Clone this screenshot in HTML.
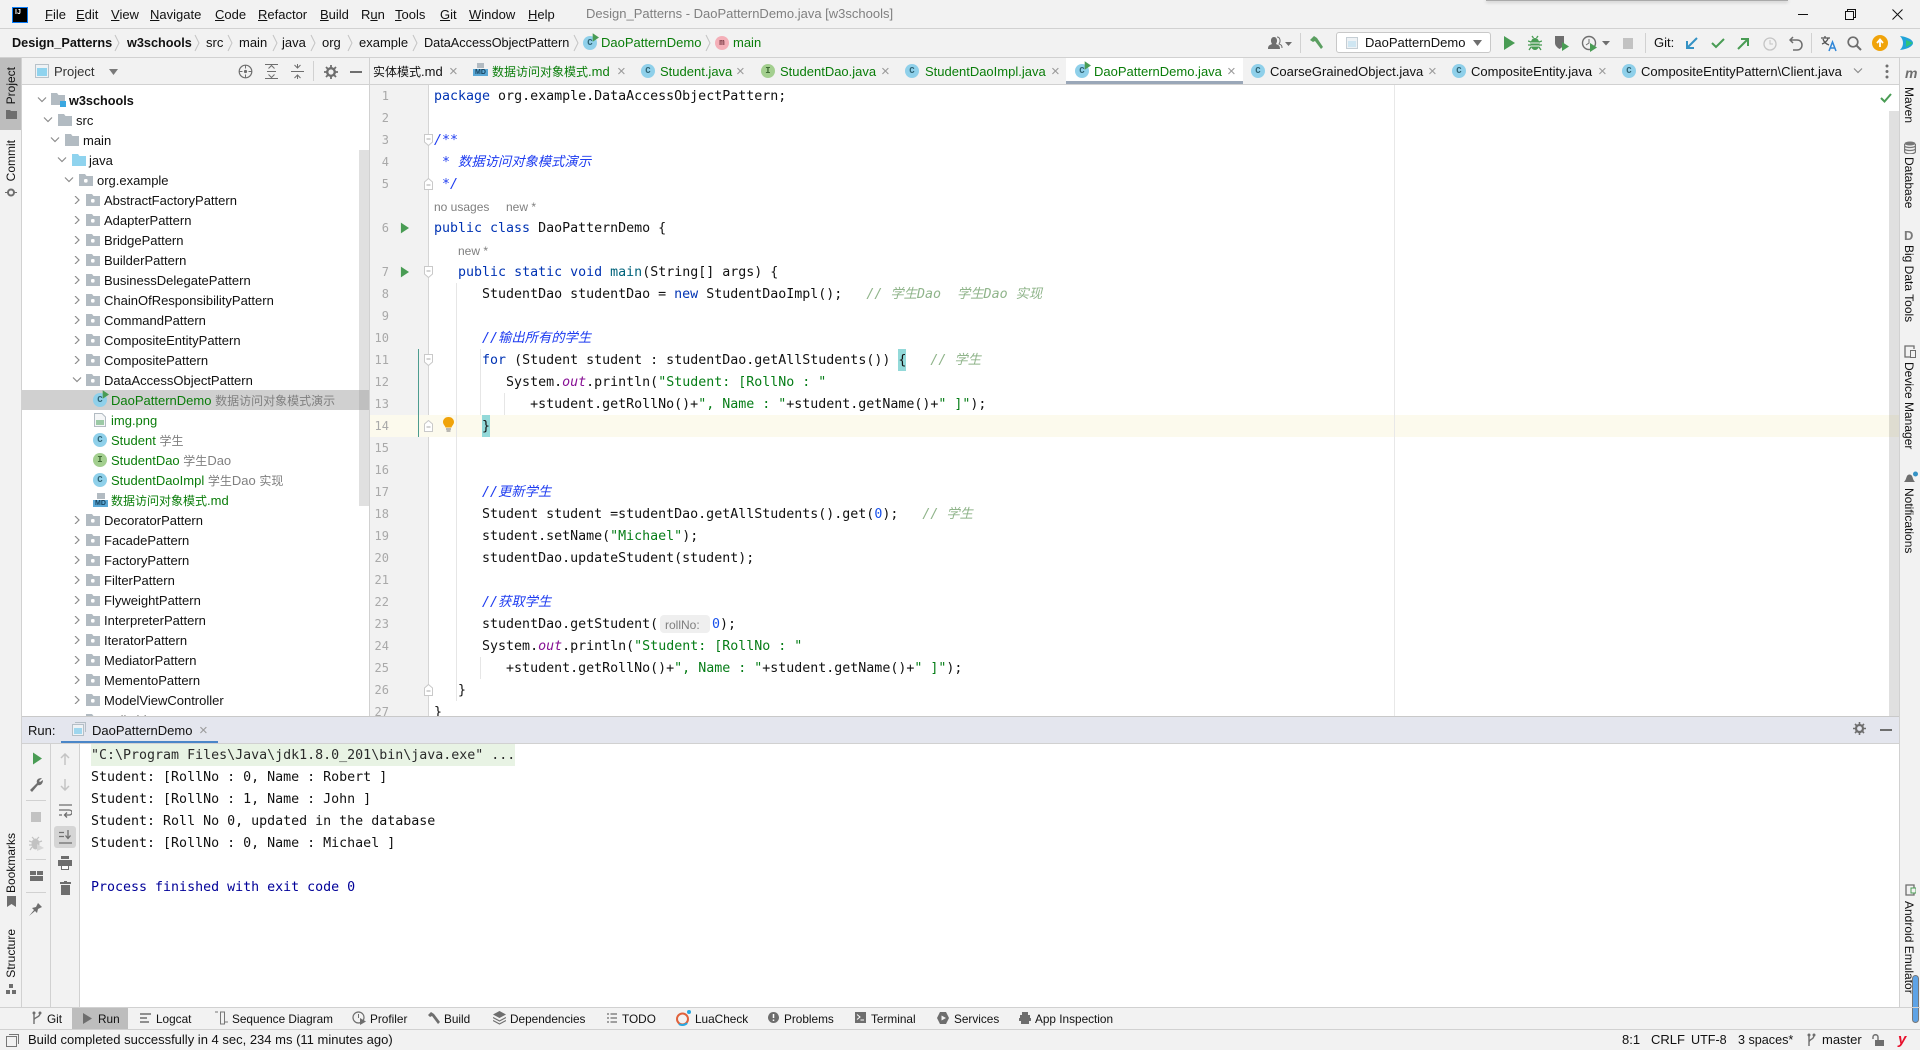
<!DOCTYPE html>
<html lang="zh"><head><meta charset="utf-8"><title>Design_Patterns - DaoPatternDemo.java [w3schools]</title>
<style>
html,body{margin:0;padding:0;background:#fff}
#w{position:relative;width:1920px;height:1050px;overflow:hidden;background:#f2f2f2;font:13px "Liberation Sans","Noto Sans CJK SC",sans-serif;color:#111}
#w div,#w svg,#w span.a{position:absolute}
.t{white-space:nowrap;line-height:16px}
.h{background:#d1d1d1}
.g{color:#0a7d0a}
.x{color:#9a9a9a;font-size:15px;line-height:16px;white-space:nowrap}
.ic{width:14px;height:14px;border-radius:50%;background:#8fd0ea;color:#2f6475;font:bold 9px/14px "Liberation Mono",monospace;text-align:center}
.ii{background:#a3cf8f;color:#3d6a33}
.r{left:0;width:347px;height:20px;line-height:20px;white-space:nowrap}
.r b{font-weight:normal;position:absolute;left:82px;top:1px}
.r.pk .c1{left:51px;top:6px;width:8px;height:8px}
.r.pk .f1{left:64px;top:4px;width:14px;height:12px}
.r em{font-style:normal;color:#808080}
i{font-style:normal;font-size:12px}
.l{left:0;height:22px;margin-top:1px;white-space:pre;font:13.3px/22px "DejaVu Sans Mono","Noto Sans CJK SC",monospace;color:#111}
.n{left:370px;width:19px;text-align:right;height:22px;font:12px/22px "DejaVu Sans Mono",monospace;color:#a9a9a9}
.k{color:#0033b3}.d{color:#1d3bf0;font-style:italic}.c{color:#8fb48a;font-style:italic}.s{color:#067d17}.nu{color:#1750eb}.m{color:#00627a}.f{color:#871094;font-style:italic}
.u{font:12px/22px "Liberation Sans",sans-serif;color:#7f7f7f;white-space:nowrap;height:22px;margin-top:1px}
.v{writing-mode:vertical-rl;font-size:12px;line-height:14px;white-space:nowrap;color:#111}
.vl{transform:rotate(180deg)}
.co{left:91px;height:22px;margin-top:1px;font:13.3px/22px "DejaVu Sans Mono",monospace;white-space:pre;color:#111}
.bb{top:1012px;font-size:11.8px;line-height:15px;white-space:nowrap;color:#111}
.sb{top:1032px;font-size:13px;line-height:16px;white-space:nowrap;color:#111}
.sep{width:1px;background:#d1d1d1}
</style></head><body><div id="w">
<svg width="0" height="0" style="left:0;top:0"><defs>
<symbol id="cr" viewBox="0 0 8 8"><path d="M2 0L6 4L2 8" fill="none" stroke="#8c8c8c" stroke-width="1.2"/></symbol>
<symbol id="cd" viewBox="0 0 10 8"><path d="M1 1.5L5 5.5L9 1.5" fill="none" stroke="#8c8c8c" stroke-width="1.2"/></symbol>
<symbol id="fo" viewBox="0 0 14 12"><path d="M0 0H6L7.5 2H14V12H0Z" fill="#b2bbc2"/></symbol>
<symbol id="pk" viewBox="0 0 14 12"><path d="M0 0H6L7.5 2H14V12H0Z" fill="#b2bbc2"/><rect x="5" y="5" width="3.6" height="3.6" rx="1.2" fill="#fff"/></symbol>
<symbol id="ps" viewBox="0 0 10 12"><path d="M1 0L10 6L1 12Z" fill="#499c54"/></symbol>
<symbol id="fd" viewBox="0 0 9 12"><path d="M.5 .5H8.5V8L4.5 11.5L.5 8Z" fill="#fff" stroke="#c9c9c9"/><path d="M2.5 5H6.5" stroke="#aaa"/></symbol>
<symbol id="fu" viewBox="0 0 9 12"><path d="M.5 11.5H8.5V4L4.5 .5L.5 4Z" fill="#fff" stroke="#c9c9c9"/><path d="M2.5 7H6.5" stroke="#aaa"/></symbol>
</defs></svg>

<!-- title bar -->
<div style="left:1486px;top:0;width:302px;height:1px;background:#aaa;box-shadow:0 1px 3px #999"></div>
<div style="left:12px;top:7px;width:16px;height:16px;background:#000;border:1px solid #087cfa;box-sizing:border-box;color:#fff;font:bold 7px/9px 'Liberation Sans',sans-serif;padding-left:2px">IJ</div>
<div class="t" style="left:45px;top:7px"><u>F</u>ile</div>
<div class="t" style="left:76px;top:7px"><u>E</u>dit</div>
<div class="t" style="left:111px;top:7px"><u>V</u>iew</div>
<div class="t" style="left:150px;top:7px"><u>N</u>avigate</div>
<div class="t" style="left:215px;top:7px"><u>C</u>ode</div>
<div class="t" style="left:258px;top:7px"><u>R</u>efactor</div>
<div class="t" style="left:320px;top:7px"><u>B</u>uild</div>
<div class="t" style="left:361px;top:7px">R<u>u</u>n</div>
<div class="t" style="left:395px;top:7px"><u>T</u>ools</div>
<div class="t" style="left:440px;top:7px"><u>G</u>it</div>
<div class="t" style="left:469px;top:7px"><u>W</u>indow</div>
<div class="t" style="left:528px;top:7px"><u>H</u>elp</div>
<div class="t" style="left:586px;top:6px;color:#808080">Design_Patterns - DaoPatternDemo.java [w3schools]</div>
<div style="left:1798px;top:14px;width:10px;height:1px;background:#111"></div>
<svg style="left:1845px;top:9px" width="11" height="11"><path d="M.5 2.5H8.5V10.5H.5ZM2.5 2.5V.5H10.5V8.5H8.5" fill="none" stroke="#111"/></svg>
<svg style="left:1892px;top:9px" width="11" height="11"><path d="M.5 .5L10.5 10.5M10.5 .5L.5 10.5" stroke="#111"/></svg>
<div class="h" style="left:0;top:28px;width:1920px;height:1px"></div>

<!-- breadcrumb -->
<div class="t" style="left:12px;top:35px;font-weight:bold;font-size:12.7px">Design_Patterns</div>
<div class="t" style="left:127px;top:35px;font-weight:bold;font-size:12.7px">w3schools</div>
<div class="t" style="left:206px;top:35px">src</div>
<div class="t" style="left:239px;top:35px">main</div>
<div class="t" style="left:282px;top:35px">java</div>
<div class="t" style="left:322px;top:35px">org</div>
<div class="t" style="left:359px;top:35px">example</div>
<div class="t" style="left:424px;top:35px;font-size:12.7px">DataAccessObjectPattern</div>
<div class="ic" style="left:583px;top:36px">C</div>
<svg style="left:592px;top:33px" width="7" height="9"><use href="#ps"/></svg>
<div class="t g" style="left:601px;top:35px">DaoPatternDemo</div>
<div class="ic" style="left:715px;top:36px;background:#f4afb8;color:#7a3a44">m</div>
<div class="t g" style="left:733px;top:35px">main</div>
<svg style="left:0;top:34px" width="720" height="18"><path d="M115 1L119 9L115 17M195 1L199 9L195 17M228 1L232 9L228 17M273 1L277 9L273 17M311 1L315 9L311 17M348 1L352 9L348 17M413 1L417 9L413 17M574 1L578 9L574 17M706 1L710 9L706 17" fill="none" stroke="#c4c4c4"/></svg>

<!-- toolbar -->
<svg style="left:1267px;top:36px" width="26" height="14"><path d="M1 13C1 9 3 9 5 8C3 5 4 1 7 1C10 1 11 5 9 8C11 9 13 9 13 13Z" fill="#6e6e6e"/><path d="M10 1C13 1 14 5 12 8C14 9 15 9 15 12" fill="none" stroke="#6e6e6e"/><path d="M18 6H25L21.500 10Z" fill="#6e6e6e"/></svg>
<div class="sep" style="left:1300px;top:33px;height:20px"></div>
<svg style="left:1309px;top:35px" width="15" height="15"><path d="M1 5L5 1L8 3L14 12L12 14L6 6L4 7Z" fill="#5a9e60"/></svg>
<div style="left:1336px;top:32px;width:155px;height:21px;background:#fff;border:1px solid #c8c8c8;border-radius:3px;box-sizing:border-box"></div>
<svg style="left:1346px;top:37px" width="12" height="12"><rect x=".5" y=".5" width="11" height="11" fill="#eef2f5" stroke="#c5ced4"/><rect x="2" y="4" width="8" height="6" fill="#cfe6f2"/></svg>
<div class="t" style="left:1365px;top:35px">DaoPatternDemo</div>
<svg style="left:1473px;top:40px" width="9" height="6"><path d="M0 0H9L4.500 6Z" fill="#6e6e6e"/></svg>
<svg style="left:1504px;top:36px" width="11" height="14"><path d="M0 0L11 7L0 14Z" fill="#499c54"/></svg>
<svg style="left:1528px;top:35px" width="14" height="16"><ellipse cx="7" cy="9" rx="4.500" ry="6" fill="#499c54"/><path d="M0 6L3 7M14 6L11 7M0 10H3M14 10H11M1 15L3 12M13 15L11 12M4 1L5.500 3M10 1L8.500 3" stroke="#499c54" stroke-width="1.300"/><path d="M3 8H11M3 11H11" stroke="#f2f2f2"/></svg>
<svg style="left:1554px;top:35px" width="16" height="16"><path d="M1 1H10V8C10 11 7 13 5.500 14C4 13 1 11 1 8Z" fill="#6e6e6e"/><path d="M8 7L15 11.500L8 16Z" fill="#499c54"/></svg>
<svg style="left:1581px;top:35px" width="30" height="17"><circle cx="8" cy="8" r="6.500" fill="none" stroke="#6e6e6e" stroke-width="1.400"/><path d="M8 4V8L5 10" fill="none" stroke="#6e6e6e"/><path d="M9 8L16 12.500L9 17Z" fill="#499c54"/><path d="M21 6H29L25 10.500Z" fill="#6e6e6e"/></svg>
<div style="left:1623px;top:38px;width:10px;height:11px;background:#c2c2c2"></div>
<div class="sep" style="left:1645px;top:33px;height:20px"></div>
<div class="t" style="left:1654px;top:35px">Git:</div>
<svg style="left:1685px;top:37px" width="13" height="13"><path d="M12 1L2 11M2 4V11H9" fill="none" stroke="#3592c4" stroke-width="2"/></svg>
<svg style="left:1711px;top:38px" width="14" height="11"><path d="M1 5L5 9L13 1" fill="none" stroke="#499c54" stroke-width="2"/></svg>
<svg style="left:1737px;top:37px" width="13" height="13"><path d="M1 12L11 2M4 2H11V9" fill="none" stroke="#499c54" stroke-width="2"/></svg>
<svg style="left:1763px;top:37px" width="14" height="14"><circle cx="7" cy="7" r="6" fill="none" stroke="#c4c4c4" stroke-width="1.300"/><path d="M7 3V7H10" fill="none" stroke="#c4c4c4"/></svg>
<svg style="left:1789px;top:36px" width="14" height="15"><path d="M4 1L1 4L4 7M1 4H8C11 4 13 6 13 9S11 14 8 14H4" fill="none" stroke="#6e6e6e" stroke-width="1.500"/></svg>
<div class="sep" style="left:1811px;top:33px;height:20px"></div>
<svg style="left:1820px;top:34px" width="17" height="18"><path d="M1 4H10M5 2V4M2 10C5 9 8 6 8 4M3 5C4 8 6 10 9 11" fill="none" stroke="#555" stroke-width="1.300"/><path d="M9 17L12.500 8L16 17M10.500 14H14.500" fill="none" stroke="#2f86d8" stroke-width="1.500"/></svg>
<svg style="left:1847px;top:36px" width="15" height="15"><circle cx="6" cy="6" r="4.800" fill="none" stroke="#6e6e6e" stroke-width="1.700"/><path d="M9.500 9.500L14 14" stroke="#6e6e6e" stroke-width="2"/></svg>
<svg style="left:1872px;top:35px" width="16" height="16"><circle cx="8" cy="8" r="8" fill="#f0a30a"/><path d="M8 12V5M5 8L8 4.500L11 8" fill="none" stroke="#fff" stroke-width="1.800"/></svg>
<svg style="left:1899px;top:35px" width="15" height="16"><path d="M1 1C9 2 14 5 14 8C14 11 9 14 1 15C5 11 5 5 1 1Z" fill="#21a4d8"/><path d="M7 5L14 8L7 12Z" fill="#2fc37a"/></svg>
<div class="h" style="left:0;top:57px;width:1920px;height:1px"></div>

<!-- left strip -->
<div style="left:0;top:58px;width:21px;height:72px;background:#bdbdbd"></div>
<div class="h" style="left:21px;top:58px;width:1px;height:949px"></div>
<div class="v vl" style="left:4px;top:67px">Project</div>
<svg style="left:6px;top:110px" width="11" height="9"><path d="M0 0H4L5 1H11V9H0Z" fill="#6e6e6e"/></svg>
<div class="v vl" style="left:4px;top:140px">Commit</div>
<svg style="left:5px;top:187px" width="12" height="11"><circle cx="6" cy="5.500" r="3" fill="none" stroke="#6e6e6e" stroke-width="2"/><path d="M0 5.500H3M9 5.500H12" stroke="#6e6e6e"/></svg>
<div class="v vl" style="left:4px;top:833px">Bookmarks</div>
<svg style="left:7px;top:896px" width="9" height="11"><path d="M0 0H9V11L4.500 8L0 11Z" fill="#6e6e6e"/></svg>
<div class="v vl" style="left:4px;top:929px">Structure</div>
<svg style="left:6px;top:984px" width="10" height="10"><rect x="3" y="0" width="4" height="4" fill="#6e6e6e"/><rect x="0" y="6" width="4" height="4" fill="#6e6e6e"/><rect x="6" y="6" width="4" height="4" fill="#6e6e6e"/></svg>

<!-- project header -->
<svg style="left:35px;top:64px" width="14" height="14"><rect x=".5" y=".5" width="13" height="13" fill="#eef2f5" stroke="#b8c2c9"/><rect x="2" y="4" width="10" height="8" fill="#8fd3ee"/></svg>
<div class="t" style="left:54px;top:64px;color:#333">Project</div>
<svg style="left:109px;top:69px" width="9" height="6"><path d="M0 0H9L4.500 6Z" fill="#7a7a7a"/></svg>
<svg style="left:238px;top:64px" width="15" height="15"><circle cx="7.500" cy="7.500" r="6.300" fill="none" stroke="#6e6e6e" stroke-width="1.200"/><circle cx="7.500" cy="7.500" r="1.600" fill="#6e6e6e"/><path d="M7.500 1V4.500M7.500 10.500V14M1 7.500H4.500M10.500 7.500H14" stroke="#6e6e6e"/></svg>
<svg style="left:265px;top:64px" width="13" height="15"><path d="M0 .5H13M0 14.500H13M2 7.500H11M3.500 4.500L6.500 1.500L9.500 4.500M3.500 10.500L6.500 13.500L9.500 10.500" fill="none" stroke="#6e6e6e"/></svg>
<svg style="left:291px;top:64px" width="13" height="15"><path d="M0 7.500H13M3.500 1L6.500 4L9.500 1M3.500 14L6.500 11L9.500 14M6.500 0V4M6.500 11V15" fill="none" stroke="#6e6e6e"/></svg>
<div class="sep" style="left:313px;top:61px;height:20px"></div>
<svg style="left:324px;top:65px" width="14" height="14"><circle cx="7" cy="7" r="3.800" fill="none" stroke="#6e6e6e" stroke-width="2.400"/><path d="M7 0V2.500M7 11.500V14M0 7H2.500M11.500 7H14M2 2L3.700 3.700M10.300 10.300L12 12M12 2L10.300 3.700M3.700 10.300L2 12" stroke="#6e6e6e" stroke-width="1.800"/></svg>
<div style="left:350px;top:71px;width:12px;height:2px;background:#6e6e6e"></div>

<!-- tree -->
<div style="left:22px;top:85px;width:348px;height:631px;background:#fff;overflow:hidden">
<div style="left:0;top:305px;width:347px;height:20px;background:#d0d0d0"></div>
<div style="left:337px;top:65px;width:10px;height:356px;background:#e0e0e0"></div>
<div style="left:337px;top:305px;width:10px;height:20px;background:#bfbfbf"></div>
<div class="r" style="top:5px"><svg style="left:15px;top:6px" width="10" height="8"><use href="#cd"/></svg><svg style="left:29px;top:3px" width="14" height="12"><use href="#fo"/></svg><div style="left:38px;top:11px;width:6px;height:6px;background:#3aa7e0"></div><b style="left:47px;font-weight:bold;font-size:12.7px">w3schools</b></div>
<div class="r" style="top:25px"><svg style="left:21px;top:6px" width="10" height="8"><use href="#cd"/></svg><svg style="left:36px;top:4px" width="14" height="12"><use href="#fo"/></svg><b style="left:54px">src</b></div>
<div class="r" style="top:45px"><svg style="left:28px;top:6px" width="10" height="8"><use href="#cd"/></svg><svg style="left:43px;top:4px" width="14" height="12"><use href="#fo"/></svg><b style="left:61px">main</b></div>
<div class="r" style="top:65px"><svg style="left:35px;top:6px" width="10" height="8"><use href="#cd"/></svg><svg style="left:50px;top:4px;" width="14" height="12"><path d="M0 0H6L7.500 2H14V12H0Z" fill="#8fd3ee"/></svg><b style="left:67px">java</b></div>
<div class="r" style="top:85px"><svg style="left:42px;top:6px" width="10" height="8"><use href="#cd"/></svg><svg style="left:57px;top:4px" width="14" height="12"><use href="#pk"/></svg><b style="left:75px">org.example</b></div>
<div class="r pk" style="top:105px"><svg class="c1"><use href="#cr"/></svg><svg class="f1"><use href="#pk"/></svg><b>AbstractFactoryPattern</b></div>
<div class="r pk" style="top:125px"><svg class="c1"><use href="#cr"/></svg><svg class="f1"><use href="#pk"/></svg><b>AdapterPattern</b></div>
<div class="r pk" style="top:145px"><svg class="c1"><use href="#cr"/></svg><svg class="f1"><use href="#pk"/></svg><b>BridgePattern</b></div>
<div class="r pk" style="top:165px"><svg class="c1"><use href="#cr"/></svg><svg class="f1"><use href="#pk"/></svg><b>BuilderPattern</b></div>
<div class="r pk" style="top:185px"><svg class="c1"><use href="#cr"/></svg><svg class="f1"><use href="#pk"/></svg><b>BusinessDelegatePattern</b></div>
<div class="r pk" style="top:205px"><svg class="c1"><use href="#cr"/></svg><svg class="f1"><use href="#pk"/></svg><b>ChainOfResponsibilityPattern</b></div>
<div class="r pk" style="top:225px"><svg class="c1"><use href="#cr"/></svg><svg class="f1"><use href="#pk"/></svg><b>CommandPattern</b></div>
<div class="r pk" style="top:245px"><svg class="c1"><use href="#cr"/></svg><svg class="f1"><use href="#pk"/></svg><b>CompositeEntityPattern</b></div>
<div class="r pk" style="top:265px"><svg class="c1"><use href="#cr"/></svg><svg class="f1"><use href="#pk"/></svg><b>CompositePattern</b></div>
<div class="r pk" style="top:285px"><svg style="left:50px;top:6px" width="10" height="8"><use href="#cd"/></svg><svg class="f1"><use href="#pk"/></svg><b>DataAccessObjectPattern</b></div>
<div class="r" style="top:305px"><div class="ic" style="left:71px;top:3px">C</div><svg style="left:80px;top:0" width="7" height="9"><use href="#ps"/></svg><b style="left:89px"><span class="g">DaoPatternDemo</span> <em><i>数据访问对象模式演示</i></em></b></div>
<div class="r" style="top:325px"><svg style="left:72px;top:3px" width="12" height="14"><path d="M.5 .5H8L11.500 4V13.500H.5Z" fill="#f4f6f7" stroke="#b2bbc2"/><rect x="2" y="7" width="8" height="5" fill="#9cc9a5"/></svg><b style="left:89px" class="g">img.png</b></div>
<div class="r" style="top:345px"><div class="ic" style="left:71px;top:3px">C</div><b style="left:89px"><span class="g">Student</span> <em><i>学生</i></em></b></div>
<div class="r" style="top:365px"><div class="ic ii" style="left:71px;top:3px">I</div><b style="left:89px"><span class="g">StudentDao</span> <em><i>学生</i>Dao</em></b></div>
<div class="r" style="top:385px"><div class="ic" style="left:71px;top:3px">C</div><b style="left:89px"><span class="g">StudentDaoImpl</span> <em><i>学生</i>Dao <i>实现</i></em></b></div>
<div class="r" style="top:405px"><div style="left:75px;top:3px;width:8px;height:6px;background:#b2bbc2"></div><div style="left:71px;top:10px;width:15px;height:7px;background:#5aa8d6;color:#16425e;font:bold 7px/7px 'Liberation Sans',sans-serif;text-align:center">MD</div><b style="left:89px" class="g"><i>数据访问对象模式</i>.md</b></div>
<div class="r pk" style="top:425px"><svg class="c1"><use href="#cr"/></svg><svg class="f1"><use href="#pk"/></svg><b>DecoratorPattern</b></div>
<div class="r pk" style="top:445px"><svg class="c1"><use href="#cr"/></svg><svg class="f1"><use href="#pk"/></svg><b>FacadePattern</b></div>
<div class="r pk" style="top:465px"><svg class="c1"><use href="#cr"/></svg><svg class="f1"><use href="#pk"/></svg><b>FactoryPattern</b></div>
<div class="r pk" style="top:485px"><svg class="c1"><use href="#cr"/></svg><svg class="f1"><use href="#pk"/></svg><b>FilterPattern</b></div>
<div class="r pk" style="top:505px"><svg class="c1"><use href="#cr"/></svg><svg class="f1"><use href="#pk"/></svg><b>FlyweightPattern</b></div>
<div class="r pk" style="top:525px"><svg class="c1"><use href="#cr"/></svg><svg class="f1"><use href="#pk"/></svg><b>InterpreterPattern</b></div>
<div class="r pk" style="top:545px"><svg class="c1"><use href="#cr"/></svg><svg class="f1"><use href="#pk"/></svg><b>IteratorPattern</b></div>
<div class="r pk" style="top:565px"><svg class="c1"><use href="#cr"/></svg><svg class="f1"><use href="#pk"/></svg><b>MediatorPattern</b></div>
<div class="r pk" style="top:585px"><svg class="c1"><use href="#cr"/></svg><svg class="f1"><use href="#pk"/></svg><b>MementoPattern</b></div>
<div class="r pk" style="top:605px"><svg class="c1"><use href="#cr"/></svg><svg class="f1"><use href="#pk"/></svg><b>ModelViewController</b></div>
<div class="r pk" style="top:625px"><svg class="c1"><use href="#cr"/></svg><svg class="f1"><use href="#pk"/></svg><b>NullObjectPattern</b></div>
</div>
<div class="h" style="left:22px;top:84px;width:1877px;height:1px"></div>
<div class="h" style="left:369px;top:58px;width:1px;height:658px"></div>

<!-- tabs -->
<div style="left:1066px;top:58px;width:177px;height:26px;background:#fff"></div>
<div style="left:1066px;top:81px;width:177px;height:3px;background:#9aa7b8"></div>
<div class="t" style="left:373px;top:64px"><i>实体模式</i>.md</div><div class="x" style="left:449px;top:64px">×</div>
<div style="left:477px;top:63px;width:7px;height:5px;background:#b2bbc2"></div><div style="left:473px;top:69px;width:15px;height:7px;background:#5aa8d6;color:#16425e;font:bold 7px/7px 'Liberation Sans',sans-serif;text-align:center">MD</div>
<div class="t g" style="left:492px;top:64px"><i>数据访问对象模式</i>.md</div><div class="x" style="left:617px;top:64px">×</div>
<div class="ic" style="left:641px;top:64px">C</div><div class="t g" style="left:660px;top:64px">Student.java</div><div class="x" style="left:736px;top:64px">×</div>
<div class="ic ii" style="left:761px;top:64px">I</div><div class="t g" style="left:780px;top:64px">StudentDao.java</div><div class="x" style="left:881px;top:64px">×</div>
<div class="ic" style="left:905px;top:64px">C</div><div class="t g" style="left:925px;top:64px">StudentDaoImpl.java</div><div class="x" style="left:1051px;top:64px">×</div>
<div class="ic" style="left:1075px;top:64px">C</div><svg style="left:1084px;top:61px" width="7" height="9"><use href="#ps"/></svg><div class="t g" style="left:1094px;top:64px">DaoPatternDemo.java</div><div class="x" style="left:1227px;top:64px">×</div>
<div class="ic" style="left:1251px;top:64px">C</div><div class="t" style="left:1270px;top:64px">CoarseGrainedObject.java</div><div class="x" style="left:1428px;top:64px">×</div>
<div class="ic" style="left:1452px;top:64px">C</div><div class="t" style="left:1471px;top:64px">CompositeEntity.java</div><div class="x" style="left:1598px;top:64px">×</div>
<div class="ic" style="left:1622px;top:64px">C</div><div class="t" style="left:1641px;top:64px">CompositeEntityPattern\Client.java</div>
<svg style="left:1853px;top:67px" width="10" height="8"><use href="#cd"/></svg>
<svg style="left:1885px;top:64px" width="4" height="15"><circle cx="2" cy="2" r="1.500" fill="#6e6e6e"/><circle cx="2" cy="7.500" r="1.500" fill="#6e6e6e"/><circle cx="2" cy="13" r="1.500" fill="#6e6e6e"/></svg>

<!-- editor -->
<div style="left:370px;top:85px;width:1529px;height:631px;background:#fff;overflow:hidden" id="ed">
<div style="left:0;top:0;width:58px;height:631px;background:#f2f2f2"></div>
<div style="left:58px;top:0;width:1px;height:631px;background:#d5d5d5"></div>
<div style="left:0;top:330px;width:1519px;height:22px;background:#fcfaed"></div>
<div style="left:1024px;top:0;width:1px;height:631px;background:#e8e8e8"></div>
<div style="left:48px;top:264px;width:1px;height:88px;background:#4d9c8f"></div>
<div style="left:86px;top:198px;width:1px;height:418px;background:#e6e6e6"></div>
<div style="left:110px;top:264px;width:1px;height:66px;background:#e6e6e6"></div>
<div style="left:134px;top:308px;width:1px;height:22px;background:#e6e6e6"></div>
<div style="left:110px;top:572px;width:1px;height:22px;background:#e6e6e6"></div>
<div style="left:1519px;top:26px;width:11px;height:605px;background:#e0e0e0"></div>
<div style="left:1519px;top:330px;width:11px;height:22px;background:#dedcd0"></div>
<div style="left:528px;top:264px;width:8px;height:22px;background:#93d9d9"></div>
<div style="left:112px;top:330px;width:8px;height:22px;background:#93d9d9"></div>

<div class="n" style="left:0;top:0">1</div>
<div class="n" style="left:0;top:22px">2</div>
<div class="n" style="left:0;top:44px">3</div>
<div class="n" style="left:0;top:66px">4</div>
<div class="n" style="left:0;top:88px">5</div>
<div class="n" style="left:0;top:132px">6</div>
<div class="n" style="left:0;top:176px">7</div>
<div class="n" style="left:0;top:198px">8</div>
<div class="n" style="left:0;top:220px">9</div>
<div class="n" style="left:0;top:242px">10</div>
<div class="n" style="left:0;top:264px">11</div>
<div class="n" style="left:0;top:286px">12</div>
<div class="n" style="left:0;top:308px">13</div>
<div class="n" style="left:0;top:330px">14</div>
<div class="n" style="left:0;top:352px">15</div>
<div class="n" style="left:0;top:374px">16</div>
<div class="n" style="left:0;top:396px">17</div>
<div class="n" style="left:0;top:418px">18</div>
<div class="n" style="left:0;top:440px">19</div>
<div class="n" style="left:0;top:462px">20</div>
<div class="n" style="left:0;top:484px">21</div>
<div class="n" style="left:0;top:506px">22</div>
<div class="n" style="left:0;top:528px">23</div>
<div class="n" style="left:0;top:550px">24</div>
<div class="n" style="left:0;top:572px">25</div>
<div class="n" style="left:0;top:594px">26</div>
<div class="n" style="left:0;top:616px">27</div>

<svg style="left:30px;top:137px" width="9" height="12"><use href="#ps"/></svg>
<svg style="left:30px;top:181px" width="9" height="12"><use href="#ps"/></svg>
<svg style="left:54px;top:49px" width="9" height="12"><use href="#fd"/></svg>
<svg style="left:54px;top:93px" width="9" height="12"><use href="#fu"/></svg>
<svg style="left:54px;top:181px" width="9" height="12"><use href="#fd"/></svg>
<svg style="left:54px;top:269px" width="9" height="12"><use href="#fd"/></svg>
<svg style="left:54px;top:335px" width="9" height="12"><use href="#fu"/></svg>
<svg style="left:54px;top:599px" width="9" height="12"><use href="#fu"/></svg>
<svg style="left:73px;top:332px" width="11" height="15"><path d="M5.500 0C2 0 0 2.500 0 5C0 7.500 2 8.500 2.500 10.500H8.500C9 8.500 11 7.500 11 5C11 2.500 9 0 5.500 0Z" fill="#f0a30a"/><path d="M3 12H8M3.500 14H7.500" stroke="#777"/></svg>

<div class="l" style="left:64px;top:0"><span class="k">package</span> org.example.DataAccessObjectPattern;</div>
<div class="l" style="left:64px;top:44px"><span class="d">/**</span></div>
<div class="l" style="left:64px;top:66px"><span class="d"> * 数据访问对象模式演示</span></div>
<div class="l" style="left:64px;top:88px"><span class="d"> */</span></div>
<div class="u" style="left:64px;top:110px">no usages</div><div class="u" style="left:136px;top:110px">new *</div>
<div class="l" style="left:64px;top:132px"><span class="k">public class</span> DaoPatternDemo {</div>
<div class="u" style="left:88px;top:154px">new *</div>
<div class="l" style="left:64px;top:176px">   <span class="k">public static void</span> <span class="m">main</span>(String[] args) {</div>
<div class="l" style="left:64px;top:198px">      StudentDao studentDao = <span class="k">new</span> StudentDaoImpl();   <span class="c">// 学生Dao  学生Dao 实现</span></div>
<div class="l" style="left:64px;top:242px">      <span class="d">//输出所有的学生</span></div>
<div class="l" style="left:64px;top:264px">      <span class="k">for</span> (Student student : studentDao.getAllStudents()) {   <span class="c">// 学生</span></div>
<div class="l" style="left:64px;top:286px">         System.<span class="f">out</span>.println(<span class="s">"Student: [RollNo : "</span></div>
<div class="l" style="left:64px;top:308px">            +student.getRollNo()+<span class="s">", Name : "</span>+student.getName()+<span class="s">" ]"</span>);</div>
<div class="l" style="left:64px;top:330px">      }</div>
<div class="l" style="left:64px;top:396px">      <span class="d">//更新学生</span></div>
<div class="l" style="left:64px;top:418px">      Student student =studentDao.getAllStudents().get(<span class="nu">0</span>);   <span class="c">// 学生</span></div>
<div class="l" style="left:64px;top:440px">      student.setName(<span class="s">"Michael"</span>);</div>
<div class="l" style="left:64px;top:462px">      studentDao.updateStudent(student);</div>
<div class="l" style="left:64px;top:506px">      <span class="d">//获取学生</span></div>
<div class="l" style="left:64px;top:528px">      studentDao.getStudent(</div>
<div style="left:290px;top:530px;width:50px;height:18px;background:#efefef;border-radius:4px"></div>
<div class="u" style="left:295px;top:528px">rollNo:</div>
<div class="l" style="left:342px;top:528px"><span class="nu">0</span>);</div>
<div class="l" style="left:64px;top:550px">      System.<span class="f">out</span>.println(<span class="s">"Student: [RollNo : "</span></div>
<div class="l" style="left:64px;top:572px">         +student.getRollNo()+<span class="s">", Name : "</span>+student.getName()+<span class="s">" ]"</span>);</div>
<div class="l" style="left:64px;top:594px">   }</div>
<div class="l" style="left:64px;top:616px">}</div>
<svg style="left:1510px;top:8px" width="12" height="10"><path d="M1 5L4.500 8.500L11 1" fill="none" stroke="#499c54" stroke-width="2"/></svg>
</div>

<!-- right strip -->
<div class="h" style="left:1899px;top:58px;width:1px;height:949px"></div>
<div style="left:1905px;top:66px;color:#6e6e6e;font:italic bold 14px/14px 'Liberation Sans',sans-serif">m</div>
<div class="v" style="left:1902px;top:87px">Maven</div>
<svg style="left:1904px;top:141px" width="12" height="13"><ellipse cx="6" cy="2.500" rx="5.500" ry="2" fill="#777"/><path d="M.5 5C2 7 10 7 11.500 5M.5 8C2 10 10 10 11.500 8M.5 3V11C2 13.500 10 13.500 11.500 11V3" fill="none" stroke="#777" stroke-width="1.300"/></svg>
<div class="v" style="left:1902px;top:157px">Database</div>
<div style="left:1904px;top:229px;color:#7a7a7a;font:bold 13px/13px 'Liberation Sans',sans-serif">D</div>
<div class="v" style="left:1902px;top:245px">Big Data Tools</div>
<svg style="left:1904px;top:345px" width="12" height="13"><path d="M7 12H1V1H10V4" fill="none" stroke="#6e6e6e" stroke-width="1.300"/><rect x="6.500" y="5.500" width="5" height="7" fill="none" stroke="#6e6e6e"/></svg>
<div class="v" style="left:1902px;top:362px">Device Manager</div>
<svg style="left:1904px;top:471px" width="14" height="13"><path d="M0 11C2 9 2 7 3 5C4 3 7 3 8 5C9 7 9 9 11 11Z" fill="#6e6e6e"/><circle cx="11.500" cy="3" r="2.500" fill="#3592c4"/></svg>
<div class="v" style="left:1902px;top:488px">Notifications</div>
<svg style="left:1904px;top:884px" width="12" height="12"><path d="M2 1H10V11H2Z" fill="none" stroke="#6e6e6e" stroke-width="1.300"/><path d="M7 4H12V9H7Z" fill="#f2f2f2" stroke="#499c54"/></svg>
<div class="v" style="left:1902px;top:901px">Android Emulator</div>
<div style="left:1912px;top:975px;width:7px;height:48px;background:#5ea3e6;border:1px solid #777;border-radius:4px;box-sizing:border-box"></div>

<!-- run panel -->
<div style="left:22px;top:716px;width:1877px;height:27px;background:#e4e6ee;border-top:1px solid #c9c9c9;box-sizing:border-box"></div>
<div class="t" style="left:28px;top:723px">Run:</div>
<svg style="left:72px;top:722px" width="14" height="14"><path d="M3 .5H13.500V10" fill="none" stroke="#b4bec6"/><rect x=".5" y="2.500" width="11" height="11" fill="#eef2f5" stroke="#b4bec6"/><rect x="2" y="6" width="8" height="6" fill="#9ed6ee"/></svg>
<div class="t" style="left:92px;top:723px">DaoPatternDemo</div>
<div class="x" style="left:199px;top:723px">×</div>
<div style="left:61px;top:741px;width:157px;height:3px;background:#4a86c8"></div>
<svg style="left:1853px;top:722px" width="13" height="13"><circle cx="6.500" cy="6.500" r="3.500" fill="none" stroke="#6e6e6e" stroke-width="2.200"/><path d="M6.500 0V2.500M6.500 10.500V13M0 6.500H2.500M10.500 6.500H13M2 2L3.500 3.500M9.500 9.500L11 11M11 2L9.500 3.500M3.500 9.500L2 11" stroke="#6e6e6e" stroke-width="1.600"/></svg>
<div style="left:1880px;top:729px;width:12px;height:2px;background:#6e6e6e"></div>
<div class="h" style="left:22px;top:743px;width:1877px;height:1px"></div>
<div style="left:22px;top:744px;width:1877px;height:263px;background:#fff"></div>
<div style="left:22px;top:744px;width:28px;height:263px;background:#f2f2f2"></div>
<div class="h" style="left:50px;top:744px;width:1px;height:263px"></div>
<div style="left:51px;top:744px;width:28px;height:263px;background:#f2f2f2"></div>
<div class="h" style="left:79px;top:744px;width:1px;height:263px"></div>
<div style="left:91px;top:744px;width:424px;height:22px;background:#e8f3e4"></div>
<div class="co" style="top:744px;color:#2a2a2a">"C:\Program Files\Java\jdk1.8.0_201\bin\java.exe" ...</div>
<div class="co" style="top:766px">Student: [RollNo : 0, Name : Robert ]</div>
<div class="co" style="top:788px">Student: [RollNo : 1, Name : John ]</div>
<div class="co" style="top:810px">Student: Roll No 0, updated in the database</div>
<div class="co" style="top:832px">Student: [RollNo : 0, Name : Michael ]</div>
<div class="co" style="top:876px;color:#000098">Process finished with exit code 0</div>

<svg style="left:32px;top:752px" width="10" height="13"><use href="#ps"/></svg>
<svg style="left:29px;top:777px" width="15" height="15"><path d="M1 13L8 6C7 3 9 1 13 1L10 4L11 5L14 3C14 7 11 9 9 8L3 15Z" fill="#6e6e6e"/></svg>
<div class="sep" style="left:26px;top:800px;width:20px;height:1px"></div>
<div style="left:31px;top:812px;width:10px;height:10px;background:#c2c2c2"></div>
<svg style="left:29px;top:836px" width="15" height="15"><ellipse cx="6.500" cy="8" rx="4" ry="5.500" fill="#c2c2c2"/><path d="M0 5L3 6M13 5L10 6M0 9H3M1 14L3 11M10 1L8 3M3 1L5 3" stroke="#c2c2c2" stroke-width="1.200"/><path d="M8 8L15 12L8 15Z" fill="#d6d6d6"/></svg>
<div class="sep" style="left:26px;top:859px;width:20px;height:1px"></div>
<svg style="left:30px;top:871px" width="13" height="10"><rect x="0" y="0" width="6" height="4" fill="#6e6e6e"/><rect x="7" y="0" width="6" height="4" fill="#6e6e6e"/><rect x="0" y="5" width="13" height="5" fill="#6e6e6e"/></svg>
<div class="sep" style="left:26px;top:892px;width:20px;height:1px"></div>
<svg style="left:29px;top:902px" width="14" height="14"><path d="M0 14L5 8L3 6L7 5L9 1L13 5L9 7L8 11L6 9Z" fill="#6e6e6e"/></svg>

<svg style="left:60px;top:753px" width="10" height="12"><path d="M5 12V1M1 5L5 1L9 5" fill="none" stroke="#c4c4c4" stroke-width="1.500"/></svg>
<svg style="left:60px;top:779px" width="10" height="12"><path d="M5 0V11M1 7L5 11L9 7" fill="none" stroke="#c4c4c4" stroke-width="1.500"/></svg>
<svg style="left:59px;top:804px" width="13" height="14"><path d="M0 1H13M0 6H10C14 6 14 11 10 11H6M8 8.500L5.500 11L8 13.500M0 11H3" fill="none" stroke="#6e6e6e" stroke-width="1.300"/></svg>
<div style="left:54px;top:826px;width:22px;height:22px;background:#d5d5d5;border-radius:3px"></div>
<svg style="left:59px;top:830px" width="13" height="14"><path d="M0 2.500H5M0 6.500H5M0 13H13M9 0V8M6.500 5.500L9 8.500L11.500 5.500" fill="none" stroke="#6e6e6e" stroke-width="1.300"/></svg>
<svg style="left:58px;top:856px" width="14" height="14"><rect x="3" y="0" width="8" height="3" fill="#6e6e6e"/><rect x="0" y="4" width="14" height="6" fill="#6e6e6e"/><rect x="3.500" y="9.500" width="7" height="4" fill="#fff" stroke="#6e6e6e"/></svg>
<svg style="left:60px;top:881px" width="11" height="14"><rect x="0" y="1" width="11" height="2" fill="#6e6e6e"/><rect x="4" y="0" width="3" height="1" fill="#6e6e6e"/><path d="M1 4H10V14H1Z" fill="#6e6e6e"/></svg>

<!-- bottom tool bar -->
<div class="h" style="left:0;top:1007px;width:1920px;height:1px"></div>
<div style="left:72px;top:1008px;width:56px;height:21px;background:#bdbdbd"></div>
<svg style="left:32px;top:1011px" width="10" height="14"><path d="M2 1V13M2 9C2 6 8 7 8 2" fill="none" stroke="#6e6e6e" stroke-width="1.400"/><circle cx="2" cy="2" r="1.500" fill="#6e6e6e"/><circle cx="8" cy="2" r="1.500" fill="#6e6e6e"/></svg>
<div class="bb" style="left:47px">Git</div>
<svg style="left:83px;top:1013px" width="9" height="11"><path d="M0 0L9 5.500L0 11Z" fill="#6e6e6e"/></svg>
<div class="bb" style="left:98px">Run</div>
<svg style="left:140px;top:1013px" width="11" height="10"><path d="M0 1H11M0 5H7M0 9H9" stroke="#6e6e6e" stroke-width="1.500"/></svg>
<div class="bb" style="left:156px">Logcat</div>
<svg style="left:215px;top:1011px" width="13" height="14"><path d="M0 1H3M5.500 1H9.500V13H5.500ZM9.500 11H13" fill="none" stroke="#777"/></svg>
<div class="bb" style="left:232px">Sequence Diagram</div>
<svg style="left:352px;top:1011px" width="14" height="14"><circle cx="6.500" cy="6.500" r="5.500" fill="none" stroke="#6e6e6e" stroke-width="1.200"/><path d="M6.500 3V7" stroke="#6e6e6e"/><path d="M8 7L14 10.500L8 14Z" fill="#6e6e6e"/></svg>
<div class="bb" style="left:370px">Profiler</div>
<svg style="left:427px;top:1011px" width="14" height="14"><path d="M1 4L4 1L7 3L13 11L11 13L5 5L3 6Z" fill="#6e6e6e"/></svg>
<div class="bb" style="left:444px">Build</div>
<svg style="left:493px;top:1011px" width="13" height="14"><path d="M6.500 0L13 3.500L6.500 7L0 3.500Z" fill="#6e6e6e"/><path d="M0 6.500L6.500 10L13 6.500M0 9.500L6.500 13L13 9.500" fill="none" stroke="#6e6e6e" stroke-width="1.200"/></svg>
<div class="bb" style="left:510px">Dependencies</div>
<svg style="left:607px;top:1013px" width="10" height="10"><path d="M0 1H2M3.500 1H10M0 5H2M3.500 5H10M0 9H2M3.500 9H10" stroke="#6e6e6e" stroke-width="1.300"/></svg>
<div class="bb" style="left:622px">TODO</div>
<svg style="left:676px;top:1010px" width="15" height="16"><circle cx="6.500" cy="9" r="5.500" fill="none" stroke="#e0623c" stroke-width="2"/><path d="M3 14C5 15.500 9 15.500 11 13" fill="none" stroke="#29a8e0" stroke-width="2"/><circle cx="13" cy="2" r="2" fill="#29a8e0"/></svg>
<div class="bb" style="left:695px">LuaCheck</div>
<svg style="left:768px;top:1012px" width="11" height="11"><circle cx="5.500" cy="5.500" r="5.500" fill="#6e6e6e"/><path d="M5.500 2V6M5.500 7.500V9" stroke="#fff" stroke-width="1.500"/></svg>
<div class="bb" style="left:784px">Problems</div>
<svg style="left:855px;top:1012px" width="11" height="11"><rect width="11" height="11" fill="#6e6e6e"/><path d="M2 2.500L5 5L2 7.500M5.500 8H9" fill="none" stroke="#fff"/></svg>
<div class="bb" style="left:871px">Terminal</div>
<svg style="left:937px;top:1012px" width="12" height="12"><path d="M3 0H9L12 6L9 12H3L0 6Z" fill="#6e6e6e"/><path d="M4.500 3.500L9 6L4.500 8.500Z" fill="#f2f2f2"/></svg>
<div class="bb" style="left:954px">Services</div>
<svg style="left:1019px;top:1011px" width="12" height="14"><path d="M3 1H9V4H11V7H12V10H10V13H2V10H0V7H1V4H3Z" fill="#6e6e6e"/></svg>
<div class="bb" style="left:1035px">App Inspection</div>
<div class="h" style="left:0;top:1029px;width:1920px;height:1px"></div>

<!-- status bar -->
<svg style="left:6px;top:1034px" width="13" height="13"><path d="M3 .5H12.500V10M.5 2.500H10.500V12.500H.5Z" fill="none" stroke="#777"/></svg>
<div class="sb" style="left:28px">Build completed successfully in 4 sec, 234 ms (11 minutes ago)</div>
<div class="sb" style="left:1622px">8:1</div>
<div class="sb" style="left:1651px">CRLF</div>
<div class="sb" style="left:1691px;font-size:12.6px">UTF-8</div>
<div class="sb" style="left:1738px;font-size:12.6px">3 spaces*</div>
<svg style="left:1807px;top:1033px" width="9" height="14"><path d="M2 1V13M2 9C2 6 7 7 7 2" fill="none" stroke="#6e6e6e" stroke-width="1.400"/><circle cx="2" cy="2" r="1.500" fill="#6e6e6e"/><circle cx="7" cy="2" r="1.500" fill="#6e6e6e"/></svg>
<div class="sb" style="left:1822px">master</div>
<svg style="left:1872px;top:1034px" width="12" height="12"><path d="M1 5V3C1 0 6 0 6 3V6" fill="none" stroke="#6e6e6e" stroke-width="1.400"/><rect x="3" y="6" width="9" height="6" fill="#6e6e6e"/></svg>
<div style="left:1898px;top:1032px;color:#e8112d;font:italic bold 15px/16px 'Liberation Sans',sans-serif">y</div>
</div></body></html>
